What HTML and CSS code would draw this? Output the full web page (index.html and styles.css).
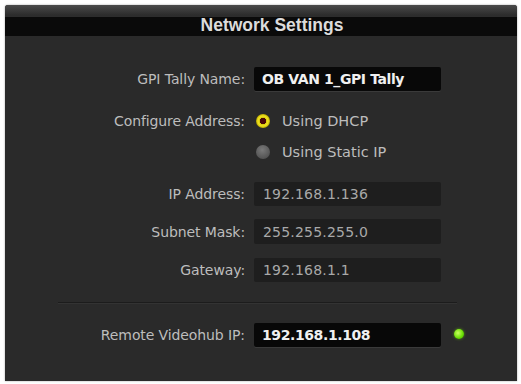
FILE: index.html
```html
<!DOCTYPE html>
<html lang="en">
<head>
    <meta charset="UTF-8">
    <meta name="viewport" content="width=device-width, initial-scale=1.0">
    <title>Network Settings</title>
    <link rel="stylesheet" href="styles.css">
</head>
<body>
    <div class="window">
        <div class="window__title">
            <div class="window__band">Network Settings</div>
        </div>
        <div class="form">
            <div class="row row--first">
                <label class="row__label">GPI Tally Name:</label>
                <div class="field field--edit">OB VAN 1_GPI Tally</div>
            </div>
            <div class="row row--radio">
                <label class="row__label">Configure Address:</label>
                <div class="radio radio--on"></div>
                <span class="radio__text">Using DHCP</span>
            </div>
            <div class="row row--radio row--tight">
                <label class="row__label"></label>
                <div class="radio"></div>
                <span class="radio__text">Using Static IP</span>
            </div>
            <div class="row row--ip">
                <label class="row__label">IP Address:</label>
                <div class="field">192.168.1.136</div>
            </div>
            <div class="row row--mask">
                <label class="row__label">Subnet Mask:</label>
                <div class="field">255.255.255.0</div>
            </div>
            <div class="row row--gateway">
                <label class="row__label">Gateway:</label>
                <div class="field">192.168.1.1</div>
            </div>
            <div class="divider"></div>
            <div class="row row--remote">
                <label class="row__label">Remote Videohub IP:</label>
                <div class="field field--edit">192.168.1.108</div>
                <div class="led"></div>
            </div>
        </div>
    </div>
</body>
</html>
```

FILE: styles.css
```css
body {
    margin: 0;
    padding: 5px 4px 3px 5px;
    background-color: #fff;
    font-family: 'DejaVu Sans', sans-serif;
}

.window {
    height: 376px;
    background-color: #2a2a2a;
    border-radius: 3px 3px 0 0;
    box-shadow: 0 0 2px rgba(0, 0, 0, 0.4);
    overflow: hidden;
}

.window__title {
    height: 31px;
    padding-top: 12px;
    box-sizing: border-box;
    background: linear-gradient(#4a4a4a, #2c2c2c 10px);
}

.window__band {
    height: 19px;
    line-height: 17px;
    background-color: #0a0a0a;
    color: #dcdcdc;
    font-family: 'Liberation Sans', sans-serif;
    font-weight: bold;
    font-size: 17.5px;
    text-align: center;
    padding-left: 22px;
}

.form {
    display: flex;
    flex-direction: column;
}

.row {
    display: flex;
    align-items: center;
    height: 24px;
}

.row--first { margin-top: 31px; }
.row--radio { margin-top: 18px; }
.row--tight { margin-top: 7px; }
.row--ip { margin-top: 18px; }
.row--mask { margin-top: 13px; height: 25px; }
.row--gateway { margin-top: 14px; }
.row--remote { margin-top: 19px; }

.row__label {
    width: 240px;
    flex-shrink: 0;
    text-align: right;
    color: #bdbdbd;
    font-size: 14px;
    letter-spacing: -0.1px;
}

.field {
    width: 187px;
    height: 100%;
    margin-left: 9px;
    box-sizing: border-box;
    padding-left: 9px;
    display: flex;
    align-items: center;
    background-color: #1e1e1e;
    border-radius: 2px;
    color: #a9a9a9;
    font-size: 14px;
    letter-spacing: 0.2px;
}

.field--edit {
    background-color: #080808;
    color: #f0f0f0;
    font-weight: bold;
    font-size: 14px;
    letter-spacing: -0.4px;
    padding-left: 8px;
    box-shadow: 0 1px 0 #3a3a3a;
}

.radio {
    width: 14px;
    height: 14px;
    margin-left: 11px;
    border-radius: 50%;
    box-sizing: border-box;
    background: radial-gradient(circle at 45% 35%, #7a7a7a, #555 70%);
}

.radio--on {
    background: radial-gradient(circle, #4a0808 0 3px, #d9cb10 3.5px, #f2e420 5px, #b8a800 7px);
}

.radio__text {
    margin-left: 12px;
    color: #bdbdbd;
    font-size: 14.5px;
    letter-spacing: 0;
}

.divider {
    margin: 20px 60px 0 53px;
    height: 1px;
    background-color: #1c1c1c;
    border-bottom: 1px solid #333;
}

.led {
    width: 10px;
    height: 10px;
    margin-left: 13px;
    margin-top: -3px;
    border-radius: 50%;
    background: radial-gradient(circle at 40% 40%, #c8ff60, #66dd00 60%, #3a9a00);
    box-shadow: 0 0 3px rgba(120, 230, 0, 0.6);
}
```
